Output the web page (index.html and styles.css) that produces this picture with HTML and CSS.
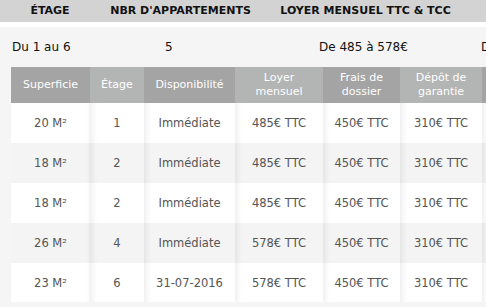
FILE: index.html
```html
<!DOCTYPE html>
<html lang="fr">
<head>
<meta charset="utf-8">
<title>Logements</title>
<link rel="stylesheet" href="styles.css">
</head>
<body>
<div class="page">
  <div class="summary-head">
    <div class="sh-cell">ÉTAGE</div>
    <div class="sh-cell">NBR D'APPARTEMENTS</div>
    <div class="sh-cell">LOYER MENSUEL TTC &amp; TCC</div>
    <div class="sh-cell"></div>
  </div>
  <div class="summary-gap"></div>
  <div class="content">
    <div class="summary-row">
      <div class="sr-cell">Du 1 au 6</div>
      <div class="sr-cell">5</div>
      <div class="sr-cell">De 485 à 578€</div>
      <div class="sr-cell">D</div>
    </div>
    <table class="units">
      <colgroup>
        <col class="c1"><col class="c2"><col class="c3"><col class="c4"><col class="c5"><col class="c6"><col class="c7">
      </colgroup>
      <thead>
        <tr>
          <th>Superficie</th>
          <th>Étage</th>
          <th>Disponibilité</th>
          <th>Loyer<br>mensuel</th>
          <th>Frais de<br>dossier</th>
          <th>Dépôt de<br>garantie</th>
          <th></th>
        </tr>
      </thead>
      <tbody>
        <tr><td>20 M²</td><td>1</td><td>Immédiate</td><td>485€ TTC</td><td>450€ TTC</td><td>310€ TTC</td><td></td></tr>
        <tr><td>18 M²</td><td>2</td><td>Immédiate</td><td>485€ TTC</td><td>450€ TTC</td><td>310€ TTC</td><td></td></tr>
        <tr><td>18 M²</td><td>2</td><td>Immédiate</td><td>485€ TTC</td><td>450€ TTC</td><td>310€ TTC</td><td></td></tr>
        <tr><td>26 M²</td><td>4</td><td>Immédiate</td><td>578€ TTC</td><td>450€ TTC</td><td>310€ TTC</td><td></td></tr>
        <tr><td>23 M²</td><td>6</td><td>31-07-2016</td><td>578€ TTC</td><td>450€ TTC</td><td>310€ TTC</td><td></td></tr>
      </tbody>
    </table>
  </div>
</div>
</body>
</html>
```
FILE: styles.css
```css
html, body {
  margin: 0;
  padding: 0;
  background: #f5f5f5;
  overflow: hidden;
}
body {
  font-family: "DejaVu Sans", Verdana, sans-serif;
  width: 486px;
  height: 307px;
}
.page {
  width: 600px;
}
.summary-head {
  display: grid;
  grid-template-columns: 100px 161px 209px 130px;
  height: 22px;
  background: #d3d3d3;
  align-items: center;
}
.sh-cell {
  text-align: center;
  font-weight: bold;
  font-size: 11px;
  color: #111;
  line-height: 22px;
}
.summary-gap {
  height: 5px;
  background: #ffffff;
}
.content {
  background: #f5f5f5;
}
.summary-row {
  display: grid;
  grid-template-columns: 153px 154px 162px 131px;
  height: 40px;
  align-items: center;
  padding-left: 12px;
}
.sr-cell {
  font-size: 12px;
  color: #111;
}
.units {
  margin-left: 11px;
  border-collapse: collapse;
  table-layout: fixed;
  width: 551px;
}
.c1 { width: 79px; }
.c2 { width: 54px; }
.c3 { width: 91px; }
.c4 { width: 88px; }
.c5 { width: 77px; }
.c6 { width: 82px; }
.c7 { width: 80px; }
.units th {
  height: 36px;
  padding: 0;
  font-weight: normal;
  font-size: 11px;
  line-height: 14px;
  color: #ffffff;
  text-align: center;
  background: #b3b5b5;
}
.units th:nth-child(odd) {
  background: #a4a4a4;
}
.units td {
  height: 40px;
  padding: 0;
  font-size: 11.5px;
  color: #555;
  text-align: center;
  background: #ffffff;
  box-shadow: inset 7px 0 6px -5px rgba(0, 0, 0, 0.08);
}
.units td:first-child {
  box-shadow: inset -3px 0 3px -2px rgba(0, 0, 0, 0.06);
}
.units tbody tr:nth-child(even) td {
  background: #f4f4f4;
}
.units tbody tr:last-child td {
  height: 39px;
}
```
